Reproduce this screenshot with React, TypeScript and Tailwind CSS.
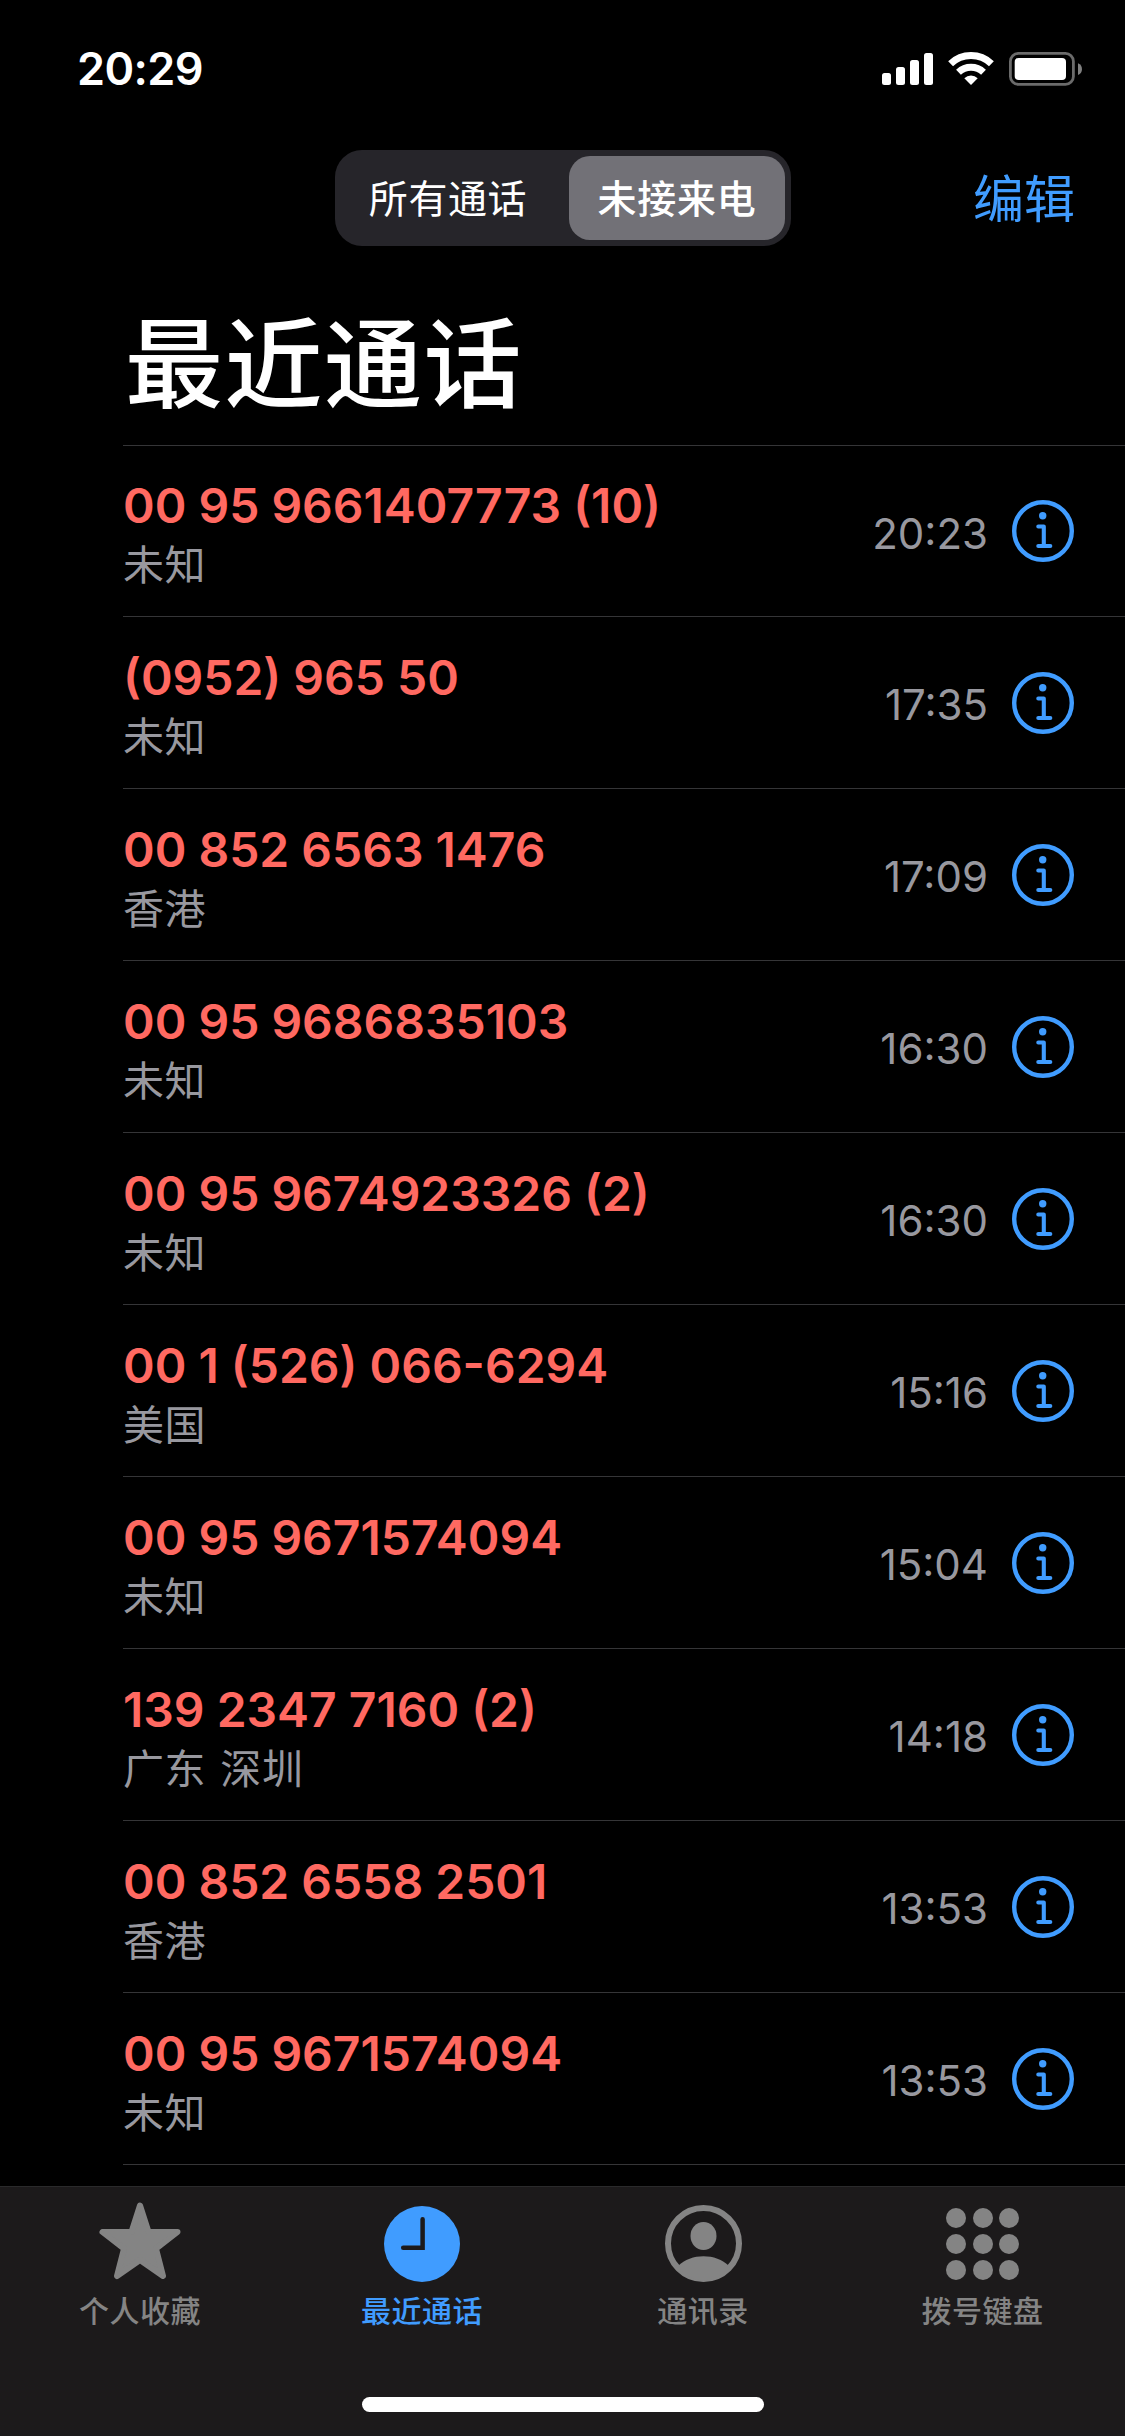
const calls = [
  { number: "00 95 9661407773 (10)", place: "未知", time: "20:23" },
  { number: "(0952) 965 50", place: "未知", time: "17:35" },
  { number: "00 852 6563 1476", place: "香港", time: "17:09" },
  { number: "00 95 9686835103", place: "未知", time: "16:30" },
  { number: "00 95 9674923326 (2)", place: "未知", time: "16:30" },
  { number: "00 1 (526) 066-6294", place: "美国", time: "15:16" },
  { number: "00 95 9671574094", place: "未知", time: "15:04" },
  { number: "139 2347 7160 (2)", place: "广东 深圳", time: "14:18" },
  { number: "00 852 6558 2501", place: "香港", time: "13:53" },
  { number: "00 95 9671574094", place: "未知", time: "13:53" },
];

function StatusIcons() {
  return (
    <svg className="h-[40px] w-[204px]" viewBox="-1 -1 204 40" fill="#fff">
      <rect x="2" y="23" width="9" height="12" rx="2.5" />
      <rect x="16" y="17" width="9" height="18" rx="2.5" />
      <rect x="30" y="10" width="9" height="25" rx="2.5" />
      <rect x="44" y="3" width="9" height="32" rx="2.5" />
      <g fill="none" stroke="#fff" strokeWidth="7">
        <path d="M70.6 13.8a29.5 29.5 0 0 1 40.8 0" />
        <path d="M78.5 22.3a18.2 18.2 0 0 1 25 0" />
      </g>
      <path d="M91 35l-6.7-6.8a10 10 0 0 1 13.4 0z" />
      <rect x="130.4" y="3.4" width="63" height="31" rx="8" fill="none" stroke="#6b6b6b" strokeWidth="2.8" />
      <rect x="134.7" y="8" width="51.3" height="22" rx="4" />
      <path d="M198 13.2c5.3 1.5 5.3 10.3 0 11.8z" fill="#808080" />
    </svg>
  );
}

function InfoIcon() {
  return (
    <svg className="h-[62px] w-[62px]" viewBox="0 0 62 62" fill="none" stroke="#409cff">
      <circle cx="31" cy="31" r="28.8" strokeWidth="4.4" />
      <circle cx="30.7" cy="15.8" r="3.7" fill="#409cff" stroke="none" />
      <path d="M26.3 26.5h5.5v19M26.3 46h12" strokeWidth="4.1" strokeLinecap="round" strokeLinejoin="round" />
    </svg>
  );
}

function StarIcon() {
  return (
    <svg className="-mt-[5px] h-[78px] w-[82px]" viewBox="0 0 82 78" fill="#848484" stroke="#848484" strokeWidth="6" strokeLinejoin="round">
      <path d="M41 3.5L49.5 30H78.5L57 46.7L64 74L41 58L18 74L25 46.7L3.5 30H32.5Z" />
    </svg>
  );
}

function ClockIcon() {
  return (
    <svg className="h-[76px] w-[76px]" viewBox="0 0 76 76">
      <circle cx="38" cy="38" r="38" fill="#409cff" />
      <path d="M38.6 13.3v28.5H19.2" fill="none" stroke="#1c1a1b" strokeWidth="4.5" strokeLinecap="round" />
    </svg>
  );
}

function ContactIcon() {
  return (
    <svg className="h-[77px] w-[77px]" viewBox="0 0 77 77" fill="#848484">
      <circle cx="38.5" cy="38.5" r="35.5" fill="none" stroke="#848484" strokeWidth="6" />
      <ellipse cx="38.5" cy="31" rx="13" ry="14" />
      <path d="M13 61c13-13 38-13 51 0c-12 19-39 19-51 0z" />
    </svg>
  );
}

function KeypadIcon() {
  return (
    <div className="grid h-[72px] w-[73px] grid-cols-[repeat(3,20px)] content-between justify-between">
      {Array.from({ length: 9 }, (_, i) => (
        <span key={i} className="size-5 rounded-full bg-[#848484]" />
      ))}
    </div>
  );
}

const tabs = [
  { label: "个人收藏", icon: <StarIcon />, active: false },
  { label: "最近通话", icon: <ClockIcon />, active: true },
  { label: "通讯录", icon: <ContactIcon />, active: false },
  { label: "拨号键盘", icon: <KeypadIcon />, active: false },
];

export default function App() {
  return (
    <div className="flex h-[2436px] w-[1125px] flex-col overflow-hidden bg-black font-[Inter,'Noto_Sans_CJK_SC',sans-serif] text-white">
      <header className="flex h-[132px] shrink-0 items-start justify-between pr-[42px] pl-[77px] pt-[49px]">
        <span className="text-[45px] leading-[40px] font-semibold tracking-[-0.6px]">20:29</span>
        <StatusIcons />
      </header>

      <nav className="grid h-[132px] shrink-0 grid-cols-[335px_456px_1fr] items-center">
        <div className="col-start-2 flex h-[96px] items-center rounded-[27px] bg-[#26252a] p-[6px]">
          <button className="h-[84px] w-[228px] pt-[2px] pr-[14px] text-[39px] tracking-[0.6px] whitespace-nowrap">所有通话</button>
          <button className="h-[84px] w-[216px] rounded-[21px] bg-[#727177] pt-[2px] text-[39px] font-medium tracking-[0.8px] whitespace-nowrap">未接来电</button>
        </div>
        <button className="pt-[5px] pr-[50px] text-right text-[51px] text-[#409cff]">编辑</button>
      </nav>

      <h1 className="ml-[123px] h-[182px] shrink-0 border-b border-[#353537] pt-[51px] pl-[2px] text-[98px] leading-[100px] font-medium tracking-[1.5px]">最近通话</h1>

      <ul className="ml-[123px] flex flex-1 flex-col">
        {calls.map((call, i) => (
          <li key={i} className="flex h-[172px] shrink-0 items-center border-b border-[#353537] pr-[51px] first:h-[171px]">
            <div className="flex flex-1 flex-col pt-[9px]">
              <span className="h-[59px] text-[48px] leading-[60px] font-semibold text-[#ff6961]">{call.number}</span>
              <span className="h-[60px] text-[41px] leading-[60px] tracking-[0.6px] text-[#98989f] [word-spacing:2px]">{call.place}</span>
            </div>
            <span className="mr-[24px] pt-[4px] text-[42px] text-[#98989f]">{call.time}</span>
            <InfoIcon />
          </li>
        ))}
      </ul>

      <footer className="flex h-[250px] shrink-0 flex-col items-center border-t border-[#2a2a2b] bg-[#1c1a1b]">
        <div className="grid h-[210px] w-full grid-cols-[280px_284px_278px_281px]">
          {tabs.map((tab) => (
            <button key={tab.label} className={tab.active ? "flex flex-col items-center text-[#409cff]" : "flex flex-col items-center text-[#848484]"}>
              <span className="flex h-[102px] items-center pt-[11px]">{tab.icon}</span>
              <span className="text-[30px] leading-[44px] font-medium tracking-[0.5px]">{tab.label}</span>
            </button>
          ))}
        </div>
        <div className="h-[15px] w-[402px] rounded-full bg-white" />
      </footer>
    </div>
  );
}
